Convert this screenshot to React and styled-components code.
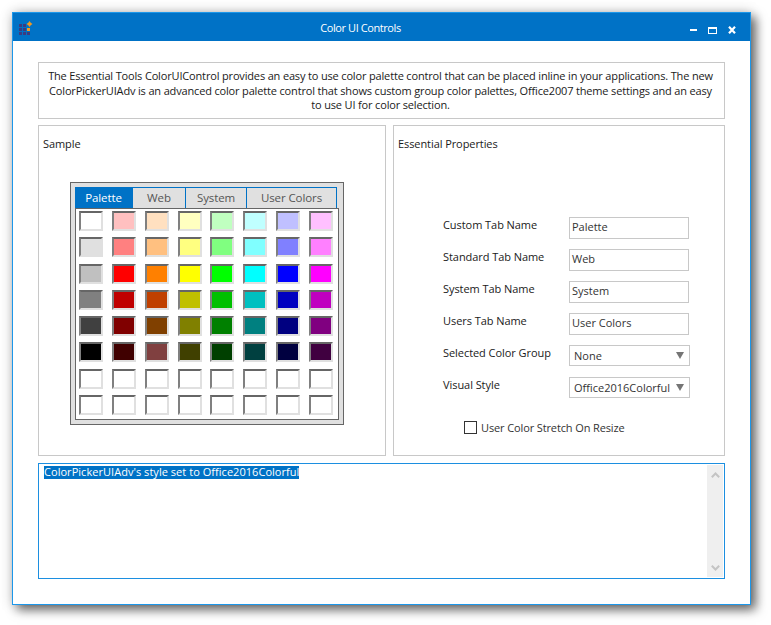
import React from 'react';
import styled, { createGlobalStyle } from 'styled-components';

const Global = createGlobalStyle`
  html, body { margin: 0; padding: 0; background: #fff; }
  body { font-family: "Open Sans", "Noto Sans", sans-serif; font-size: 11px; color: #1a1a1a; }
  * { box-sizing: border-box; }
`;
const Page = styled.div`
  width: 771px; height: 625px; padding: 12px 20px 20px 12px; overflow: hidden;
`;
const Win = styled.div`
  width: 739px; height: 593px; background: #fff; border: 1px solid #1c97ea; display: flex; flex-direction: column;
  box-shadow: 0 0 12px rgba(0,0,0,.2), 5px 5px 10px rgba(0,0,0,.55);
`;
const TitleBar = styled.div`
  height: 28px; flex: none; background: #0072c6; color: #fff; display: flex; align-items: flex-start; position: relative; padding: 6px 0 0 6px;
`;
const Title = styled.div`
  position: absolute; left: 0; right: 0; top: 0; line-height: 29px; text-align: center; font-size: 11px; letter-spacing: -.42px; padding-right: 42px;
`;
const WinButtons = styled.div`
  margin-left: auto; display: flex; align-items: flex-start; gap: 11px; padding-right: 14px; padding-top: 7px;
`;
const Body = styled.div`
  flex: 1; display: flex; flex-direction: column; padding: 21px 25px 0 25px;
`;
const Panel = styled.div`
  border: 1px solid #c8c8c8; background: #fff;
`;
const Desc = styled(Panel)`
  height: 57px; padding: 6px 8px 0 6px; text-align: center; line-height: 14.6px; font-size: 11px; letter-spacing: -.16px; white-space: nowrap;
`;
const Row = styled.div`
  display: flex; gap: 7px; height: 331px; margin: 6px 0 7px;
`;
const SamplePanel = styled(Panel)`
  width: 348px; padding: 10px 4px 0;
`;
const PropPanel = styled(Panel)`
  width: 332px; padding: 10px 4px 0; display: flex; flex-direction: column;
`;
const Heading = styled.div`
  line-height: 15px; letter-spacing: -.08px;
`;
const Picker = styled.div`
  margin: 31px 0 0 27px; width: 274px; height: 243px; background: #e0e0e0; border: 1px solid #666; padding: 4px;
`;
const Tabs = styled.div`
  display: flex; height: 21px;
`;
const Tab = styled.div`
  width: ${p => p.$w}px; height: 21px; line-height: 20px; text-align: center; font-size: 11.5px; letter-spacing: -.1px;
  background: ${p => p.$active ? '#0072c6' : '#e0e0e0'}; color: ${p => p.$active ? '#fff' : '#555'};
  border-top: 1px solid #0072c6; border-right: 1px solid #0072c6;
`;
const Grid = styled.div`
  width: 264px; height: 212px; background: #fff; border: 1px solid #666; padding: 2px 3px 0;
  display: grid; grid-template-columns: repeat(8, 24px); grid-auto-rows: 20px; column-gap: 8.86px; row-gap: 6.29px;
`;
const Swatch = styled.div`
  width: 24px; height: 20px; background: ${p => p.$c};
  border-style: solid; border-width: 2px; border-color: #666 #e0e0e0 #e0e0e0 #808080;
`;
const Form = styled.div`
  margin: 66px 0 0 45px; display: grid; grid-template-columns: 126px 121px; grid-auto-rows: 32px; align-items: start;
`;
const Label = styled.div`
  line-height: 15px; letter-spacing: -.06px;
`;
const Input = styled.div`
  width: 120px; height: 22px; border: 1px solid #c8c8c8; padding-left: 2px; line-height: 18px; color: #333;
`;
const Select = styled.div`
  width: 121px; height: 21px; border: 1px solid #c8c8c8; padding-left: 4px; line-height: 20px; color: #333; position: relative; white-space: nowrap;
`;
const Caret = styled.svg`
  position: absolute; right: 5px; top: 6px; width: 8px; height: 7px;
`;
const CheckRow = styled.div`
  display: flex; align-items: center; margin: 11px 0 0 66px; height: 14px; gap: 4px; color: #333; letter-spacing: -.12px;
`;
const Box = styled.div`
  width: 13px; height: 13px; border: 1px solid #333; background: #fff;
`;
const Log = styled.div`
  height: 116px; border: 1px solid #1c8fe0; padding: 2px 5px; position: relative;
`;
const Selected = styled.div`
  background: #0072c6; color: #fff; line-height: 12px; height: 13px; width: fit-content; letter-spacing: .04px;
`;
const Scroll = styled.div`
  position: absolute; right: 1px; top: 1px; bottom: 1px; width: 16px; background: #efefef; display: flex; flex-direction: column; justify-content: space-between; align-items: center; padding: 7px 0 6px;
`;

const colors = [
  '#ffffff #ffc0c0 #ffe0c0 #ffffc0 #c0ffc0 #c0ffff #c0c0ff #ffc0ff',
  '#e0e0e0 #ff8080 #ffc080 #ffff80 #80ff80 #80ffff #8080ff #ff80ff',
  '#c0c0c0 #ff0000 #ff8000 #ffff00 #00ff00 #00ffff #0000ff #ff00ff',
  '#808080 #c00000 #c04000 #c0c000 #00c000 #00c0c0 #0000c0 #c000c0',
  '#404040 #800000 #804000 #808000 #008000 #008080 #000080 #800080',
  '#000000 #400000 #804040 #404000 #004000 #004040 #000040 #400040',
  '#fff #fff #fff #fff #fff #fff #fff #fff',
  '#fff #fff #fff #fff #fff #fff #fff #fff',
].flatMap(r => r.split(' '));

const fields = [
  ['Custom Tab Name', 'Palette'],
  ['Standard Tab Name', 'Web'],
  ['System Tab Name', 'System'],
  ['Users Tab Name', 'User Colors'],
];

const AppIcon = () => (
  <svg width="14" height="16" viewBox="0 0 14 16" style={{ display: 'block' }}>
    {[5, 9, 13].flatMap(y => [0, 4, 8].map(x => (
      x === 8 && y === 5 ? null : (
        <rect key={`${x}-${y}`} x={x} y={y} width="3" height="3" fill={x === 8 && y === 9 ? '#f39a1f' : '#3c3c80'} />
      )
    )))}
    <path d="M10.500 2 11.700 3.800 13.500 5 11.700 6.200 10.500 8 9.300 6.200 7.500 5 9.300 3.800z" fill="#f39a1f" />
  </svg>
);

const Arrow = ({ up }) => (
  <svg width="9" height="6" viewBox="0 0 9 6">
    <path d={up ? 'M0.8 5.200 4.500 1.500 8.200 5.200' : 'M0.8 0.800 4.500 4.500 8.200 0.800'} fill="none" stroke="#c4c4c4" strokeWidth="2" />
  </svg>
);

const DropCaret = () => (
  <Caret viewBox="0 0 8 7"><path d="M0 0h8L4 7z" fill="#757575" /></Caret>
);

export default function App() {
  return (
    <Page>
      <Global />
      <Win>
        <TitleBar>
          <Title>Color UI Controls</Title>
          <AppIcon />
          <WinButtons>
            <svg width="7" height="8" viewBox="0 0 7 8"><rect x="0" y="3" width="7" height="2" fill="#fff" /></svg>
            <svg width="9" height="8" viewBox="0 0 9 8"><path d="M0 1h9v7H0zM1 3v4h7V3z" fill="#fff" fillRule="evenodd" /></svg>
            <svg width="8" height="8" viewBox="0 0 8 8"><path d="M1 0.800 7 7.200M7 0.800 1 7.200" stroke="#fff" strokeWidth="2.200" fill="none" /></svg>
          </WinButtons>
        </TitleBar>
        <Body>
          <Desc>
            The Essential Tools ColorUIControl provides an easy to use color palette control that can be placed inline in your applications. The new<br />
            ColorPickerUIAdv is an advanced color palette control that shows custom group color palettes, Office2007 theme settings and an easy<br />
            to use UI for color selection.
          </Desc>
          <Row>
            <SamplePanel>
              <Heading>Sample</Heading>
              <Picker>
                <Tabs>
                  <Tab $w={58} $active>Palette</Tab>
                  <Tab $w={53}>Web</Tab>
                  <Tab $w={61}>System</Tab>
                  <Tab $w={90}>User Colors</Tab>
                </Tabs>
                <Grid>
                  {colors.map((c, i) => <Swatch key={i} $c={c} />)}
                </Grid>
              </Picker>
            </SamplePanel>
            <PropPanel>
              <Heading>Essential Properties</Heading>
              <Form>
                {fields.map(([l, v]) => (
                  <React.Fragment key={l}>
                    <Label>{l}</Label>
                    <Input>{v}</Input>
                  </React.Fragment>
                ))}
                <Label>Selected Color Group</Label>
                <Select>None<DropCaret /></Select>
                <Label>Visual Style</Label>
                <Select>Office2016Colorful<DropCaret /></Select>
              </Form>
              <CheckRow><Box />User Color Stretch On Resize</CheckRow>
            </PropPanel>
          </Row>
          <Log>
            <Selected>ColorPickerUIAdv's style set to Office2016Colorful</Selected>
            <Scroll><Arrow up /><Arrow /></Scroll>
          </Log>
        </Body>
      </Win>
    </Page>
  );
}
